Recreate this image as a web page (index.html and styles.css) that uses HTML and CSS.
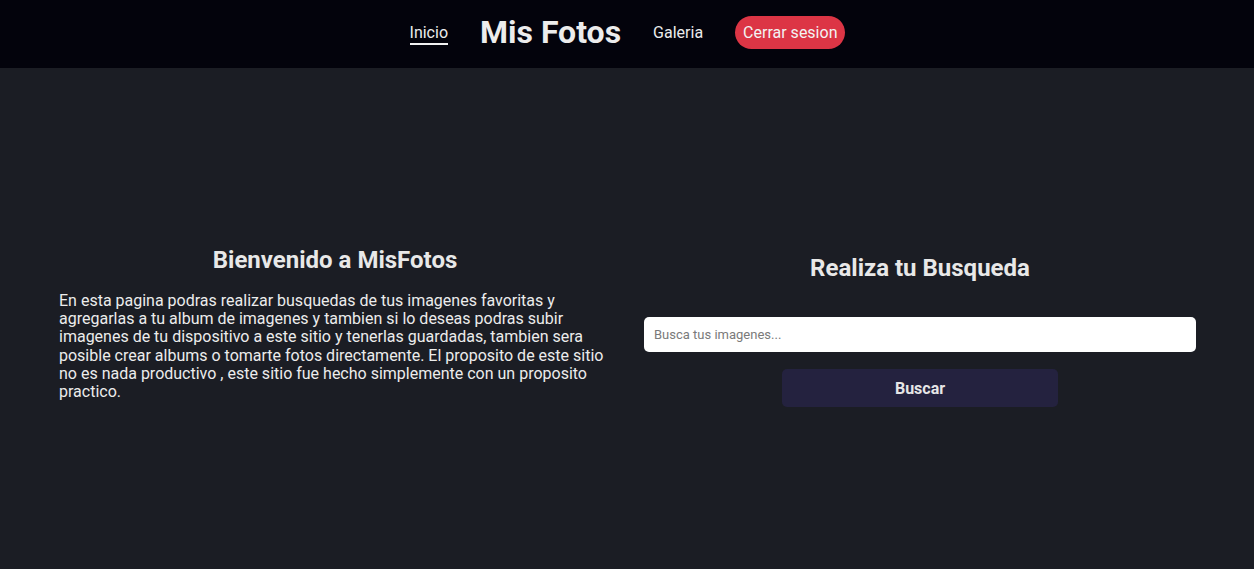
FILE: index.html
```html
<!DOCTYPE html>
<html lang="es">
<head>
<meta charset="utf-8">
<title>Mis Fotos</title>
<link rel="stylesheet" href="styles.css">
</head>
<body>
<header class="topbar">
  <nav class="nav">
    <a class="nav-link active" href="#">Inicio</a>
    <span class="brand">Mis Fotos</span>
    <a class="nav-link" href="#">Galeria</a>
    <a class="logout" href="#">Cerrar sesion</a>
  </nav>
</header>
<main class="main">
  <section class="col intro">
    <h2 class="title">Bienvenido a MisFotos</h2>
    <p class="text">En esta pagina podras realizar busquedas de tus imagenes favoritas y agregarlas a tu album de imagenes y tambien si lo deseas podras subir imagenes de tu dispositivo a este sitio y tenerlas guardadas, tambien sera posible crear albums o tomarte fotos directamente. El proposito de este sitio no es nada productivo , este sitio fue hecho simplemente con un proposito practico.</p>
  </section>
  <section class="col search">
    <h2 class="title">Realiza tu Busqueda</h2>
    <input class="search-input" type="text" placeholder="Busca tus imagenes...">
    <button class="search-btn">Buscar</button>
  </section>
</main>
</body>
</html>
```

FILE: styles.css
```css
* { box-sizing: border-box; }
html, body { margin: 0; padding: 0; }
body {
  background: #1b1d24;
  color: #e6e6e6;
  font-family: Roboto, "Liberation Sans", sans-serif;
  height: 569px;
  display: flex;
  flex-direction: column;
}
.topbar {
  background: #03030c;
  height: 68px;
  flex: none;
}
.nav {
  height: 68px;
  display: flex;
  align-items: center;
  justify-content: center;
  padding-bottom: 4px;
}
.nav-link {
  color: #ececec;
  text-decoration: none;
  font-size: 16px;
}
.nav-link.active {
  border-bottom: 2px solid #f2f2f2;
  padding-bottom: 1px;
  margin-top: 3px;
  margin-left: 1px;
}
.brand {
  font-size: 32px;
  font-weight: 700;
  color: #ececec;
  margin: 0 32px 0 32px;
}
.logout {
  margin-left: 32px;
  background: #dc3545;
  color: #f3f3f3;
  text-decoration: none;
  font-size: 16px;
  height: 33px;
  line-height: 33px;
  padding: 0 8px;
  border-radius: 17px;
}
.main {
  flex: 1;
  display: grid;
  grid-template-columns: 552px 552px;
  column-gap: 33px;
  justify-content: center;
  align-items: start;
  padding: 178px 0 0 1px;
}
.col { display: flex; flex-direction: column; }
.title {
  margin: 0;
  font-size: 24px;
  font-weight: 700;
  text-align: center;
  color: #e8e8e8;
}
.text {
  margin: 18px 0 0;
  font-size: 16px;
  line-height: 18.2px;
  color: #ececec;
}
.search { align-items: center; margin-top: 8px; }
.search-input {
  margin-top: 35px;
  width: 552px;
  height: 35px;
  border: none;
  border-radius: 5px;
  background: #ffffff;
  padding: 0 10px;
  font-family: Roboto, "Liberation Sans", sans-serif;
  font-size: 13px;
  color: #333;
  outline: none;
}
.search-input::placeholder { color: #7a7a7a; }
.search-btn {
  margin-top: 17px;
  width: 276px;
  height: 38px;
  border: none;
  border-radius: 5px;
  background: #24223f;
  color: #e6e6e6;
  font-family: Roboto, "Liberation Sans", sans-serif;
  font-size: 16px;
  font-weight: 700;
}
```
